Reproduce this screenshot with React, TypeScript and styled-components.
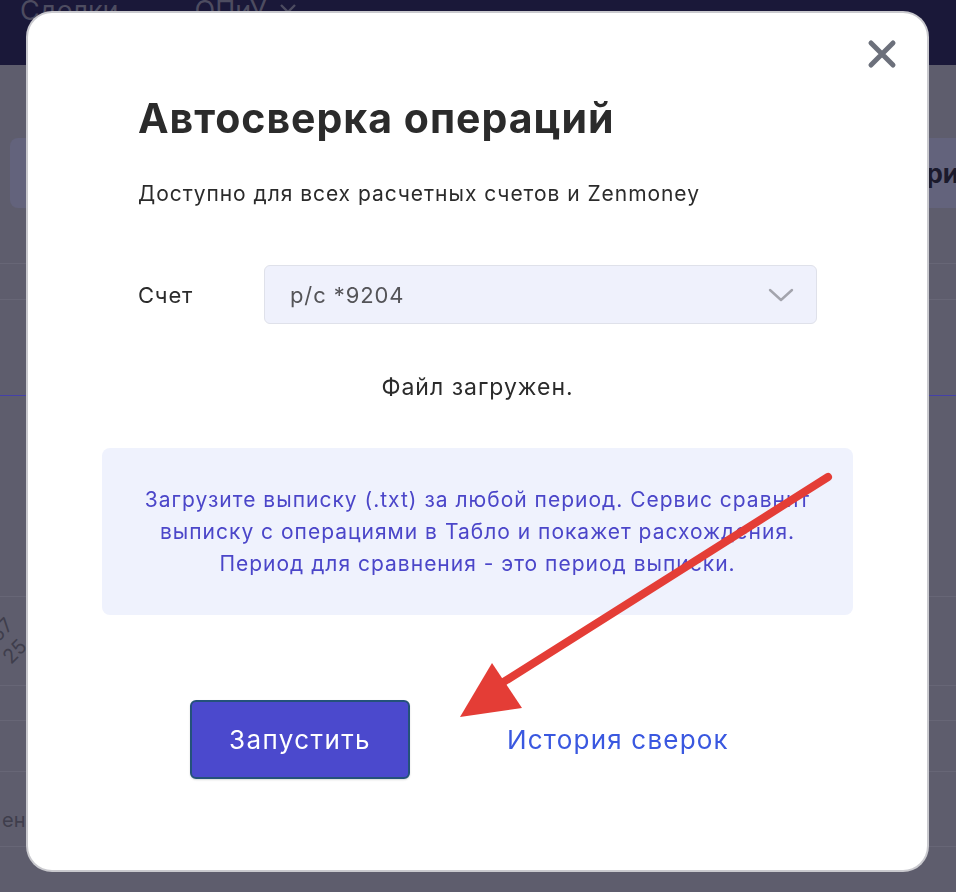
import styled, { createGlobalStyle } from 'styled-components';

export default function App() {
  return (
    <>
      <GlobalStyle />
      <BackPage>
        <TopNav>
          <NavItem>Сделки</NavItem>
          <NavItem>
            ОПиУ
            <svg width="18" height="12" viewBox="0 0 18 12">
              <path d="M2 2 L9 9 L16 2" fill="none" stroke="#4d4c60" strokeWidth="2.4" />
            </svg>
          </NavItem>
        </TopNav>
        <ToolbarRow>
          <GhostCard />
          <GhostCard $align="right">ри</GhostCard>
        </ToolbarRow>
        {backRows.map((row) => (
          <BackRow key={row.h} $h={row.h} $accent={row.accent}>
            {row.labels?.map((l) => (
              <AxisLabel key={l}>{l}</AxisLabel>
            ))}
            {row.text && <BackText>{row.text}</BackText>}
          </BackRow>
        ))}
      </BackPage>

      <Overlay>
        <Modal>
          <CloseButton aria-label="Закрыть">
            <svg width="30" height="30" viewBox="0 0 30 30">
              <path
                d="M4 4 L26 26 M26 4 L4 26"
                stroke="#6c707b"
                strokeWidth="5"
                strokeLinecap="round"
              />
            </svg>
          </CloseButton>

          <Section>
            <Title>Автосверка операций</Title>
            <Subtitle>Доступно для всех расчетных счетов и Zenmoney</Subtitle>
            <FieldRow>
              <FieldLabel>Счет</FieldLabel>
              <SelectBox>
                <span>р/с *9204</span>
                <svg width="26" height="14" viewBox="0 0 26 14">
                  <path
                    d="M2 2 L13 12 L24 2"
                    fill="none"
                    stroke="#a3a4ad"
                    strokeWidth="2.4"
                    strokeLinecap="round"
                    strokeLinejoin="round"
                  />
                </svg>
              </SelectBox>
            </FieldRow>
          </Section>

          <Status>Файл загружен.</Status>

          <InfoBox>
            Загрузите выписку (.txt) за любой период. Сервис сравнит
            <br />
            выписку с операциями в Табло и покажет расхождения.
            <br />
            Период для сравнения - это период выписки.
          </InfoBox>

          <Actions>
            <PrimaryButton>Запустить</PrimaryButton>
            <LinkButton>История сверок</LinkButton>
          </Actions>
        </Modal>
      </Overlay>

      <Annotation width="956" height="892" viewBox="0 0 956 892">
        <path
          d="M828 477 L494 688"
          stroke="#e43d36"
          strokeWidth="8"
          strokeLinecap="round"
        />
        <path d="M460 717 L492 663 L522 708 Z" fill="#e43d36" />
      </Annotation>
    </>
  );
}

/** Data **/
const backRows: { h: number; accent?: boolean; labels?: string[]; text?: string }[] = [
  { h: 56 },
  { h: 36 },
  { h: 96, accent: true },
  { h: 201 },
  { h: 89, labels: ['57', '25'] },
  { h: 35 },
  { h: 51 },
  { h: 75, text: 'ен' },
];

const GlobalStyle = createGlobalStyle`
  html, body {
    margin: 0;
    padding: 0;
    height: 100%;
    overflow: hidden;
  }
  body {
    font-family: Inter, "Noto Sans", "Liberation Sans", sans-serif;
    background: #5e5d6d;
  }
  * {
    box-sizing: border-box;
  }
`;

const BackPage = styled.div`
  display: flex;
  flex-direction: column;
  height: 100vh;
  background: #5e5d6d;
  overflow: hidden;
`;

const TopNav = styled.div`
  display: flex;
  gap: 76px;
  height: 65px;
  padding-left: 20px;
  background: #1a1839;
`;

const NavItem = styled.span`
  display: flex;
  align-items: flex-start;
  gap: 12px;
  font-size: 27px;
  line-height: 22px;
  color: #4d4c60;
  white-space: nowrap;

  svg {
    margin-top: 3px;
  }
`;

const ToolbarRow = styled.div`
  display: flex;
  justify-content: space-between;
  margin-top: 73px;
  height: 70px;
  padding: 0 0 0 10px;
`;

const GhostCard = styled.div<{ $align?: string }>`
  width: 120px;
  height: 70px;
  border-radius: 8px;
  background: #63637c;
  display: flex;
  align-items: center;
  justify-content: flex-end;
  font-size: 26px;
  font-weight: 700;
  color: #1b1a2c;
  ${(p) => p.$align === 'right' && 'border-radius: 8px 0 0 8px; margin-right: -3px;'}
`;

const BackRow = styled.div<{ $h: number; $accent?: boolean }>`
  height: ${(p) => p.$h}px;
  flex-shrink: 0;
  border-bottom: 1px solid ${(p) => (p.$accent ? '#4541a8' : '#676676')};
  display: flex;
  align-items: flex-start;
  padding: 14px 0 0 2px;
  overflow: hidden;
`;

const AxisLabel = styled.span`
  font-size: 20px;
  line-height: 20px;
  color: #3f3e4c;
  transform: rotate(-45deg);
  transform-origin: left bottom;
  margin: 14px -8px 0 -2px;

  & + & {
    margin-top: 36px;
  }
`;

const BackText = styled.span`
  align-self: flex-end;
  margin-bottom: 14px;
  font-size: 20px;
  color: #3f3e4c;
  white-space: nowrap;
`;

const Overlay = styled.div`
  position: fixed;
  inset: 0;
  display: flex;
  align-items: flex-start;
  padding: 13px 0 0 28px;
`;

const Modal = styled.div`
  position: relative;
  width: 899px;
  height: 857px;
  background: #fff;
  border-radius: 24px;
  box-shadow: 0 0 0 2px #c9c9ce;
  padding: 80px 74px 0;
  display: flex;
  flex-direction: column;
  color: #2b2b2b;
`;

const CloseButton = styled.button`
  position: absolute;
  top: 26px;
  right: 30px;
  width: 30px;
  height: 30px;
  padding: 0;
  border: 0;
  background: none;
  cursor: pointer;
`;

const Section = styled.div`
  display: flex;
  flex-direction: column;
  padding: 0 36px;
`;

const Title = styled.h1`
  margin: 0;
  font-size: 41px;
  line-height: 50px;
  font-weight: 700;
  letter-spacing: 1px;
  color: #2b2b2b;
`;

const Subtitle = styled.p`
  margin: 38px 0 0;
  font-size: 21px;
  line-height: 26px;
  letter-spacing: 0.95px;
  color: #2b2b2b;
`;

const FieldRow = styled.div`
  display: flex;
  align-items: center;
  margin-top: 58px;
`;

const FieldLabel = styled.span`
  width: 126px;
  font-size: 22px;
  letter-spacing: 0.8px;
  color: #2b2b2b;
`;

const SelectBox = styled.div`
  flex: 1;
  height: 59px;
  display: flex;
  align-items: center;
  justify-content: space-between;
  padding: 0 22px 0 25px;
  background: #eff1fc;
  border: 1.5px solid #dfe1ea;
  border-radius: 6px;
  font-size: 22px;
  letter-spacing: 0.9px;
  color: #545458;
`;

const Status = styled.p`
  margin: 50px 0 0;
  text-align: center;
  font-size: 23px;
  line-height: 26px;
  letter-spacing: 1px;
  color: #2b2b2b;
`;

const InfoBox = styled.div`
  margin-top: 48px;
  height: 167px;
  display: flex;
  align-items: center;
  justify-content: center;
  text-align: center;
  background: #eff2fd;
  border-radius: 8px;
  font-size: 21px;
  line-height: 32px;
  letter-spacing: 1px;
  color: #4b46c9;
`;

const Actions = styled.div`
  display: flex;
  align-items: center;
  gap: 97px;
  margin-top: 85px;
  padding-left: 88px;
`;

const PrimaryButton = styled.button`
  width: 220px;
  height: 79px;
  border: 2px solid #24527a;
  border-radius: 6px;
  background: #4b49cd;
  color: #fff;
  font-family: inherit;
  font-size: 26px;
  letter-spacing: 1.4px;
  box-shadow: 0 1px 2px rgba(0, 0, 0, 0.15);
  cursor: pointer;
`;

const LinkButton = styled.a`
  font-size: 26px;
  letter-spacing: 1.2px;
  color: #3a58e0;
  cursor: pointer;
`;

const Annotation = styled.svg`
  position: fixed;
  left: 0;
  top: 0;
  pointer-events: none;
`;
